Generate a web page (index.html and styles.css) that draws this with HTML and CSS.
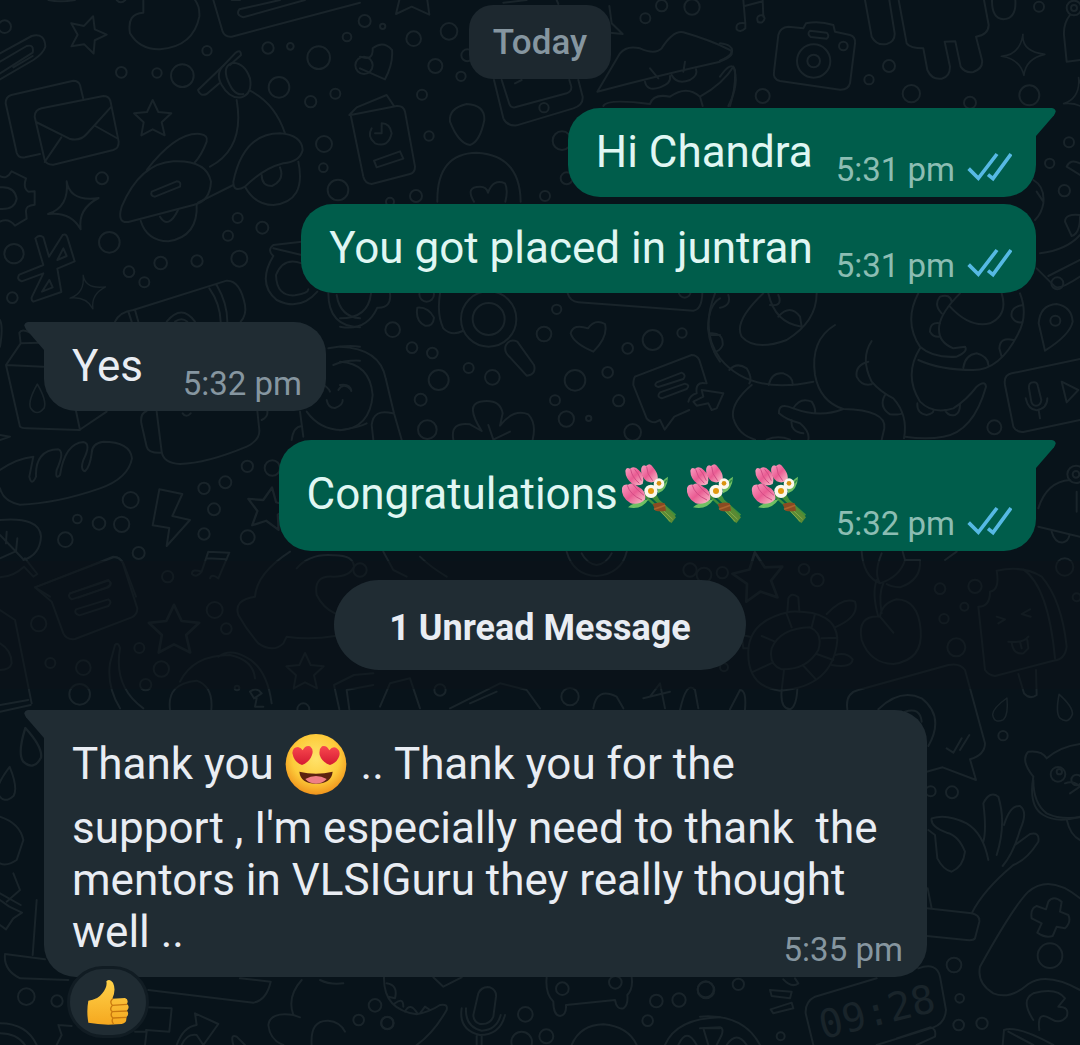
FILE: index.html
```html
<!DOCTYPE html>
<html lang="en">

<head>
    <meta charset="UTF-8">
    <meta name="viewport" content="width=device-width, initial-scale=1">
    <title>Chat</title>
    <link rel="stylesheet" href="styles.css">
</head>

<body>
    <!-- Doodle wallpaper -->
    <svg class="wallpaper" viewBox="0 0 3240 3135" preserveAspectRatio="xMidYMin slice" aria-hidden="true">
        <defs>
            <path id="star" d="M0-56 L17-20 L56-16 L27 11 L36 50 L0 32 L-34 50 L-27 11 L-56-16 L-17-20Z"/>
            <path id="spark" d="M-18-72 Q-8-10 78 -22 Q15 10 24 72 Q-5 18 -74 26 Q-10 5 -18-72Z"/>
            <path id="drop" d="M0-50 Q-34 10 -24 34 Q-2 66 24 34 Q34 8 0-50Z"/>
        </defs>

        <!-- envelope, scooter, gear -->
        <g>
            <use href="#star" transform="translate(262 102) rotate(18)"/>
            <use href="#star" transform="translate(458 356)"/>
            <use href="#spark" transform="translate(218 616)"/>
            <use href="#spark" transform="translate(262 876) scale(.7)"/>
            <path d="M430 0 V38 Q380 40 390 100 Q420 150 480 148 Q580 140 598 50 Q600 20 585 0"/>
            <path d="M640 0 L668 95 Q675 112 695 110 L1080 8 M695 0 H720 M915 0 L730 52 Q706 45 718 28 L840 0 M145 0 Q180 8 225 0 M350 0 Q362 14 376 0"/>
            <path d="M0 160 L95 108 Q135 98 136 140 Q130 160 100 180 L0 238 M0 185 L80 138 Q103 132 98 158 L0 220 M40 202 L98 168"/>
            <path d="M120 462 L75 472 Q55 475 50 458 L17 310 Q17 290 34 285 L220 242 Q235 242 240 255 L250 297"/>
            <path d="M125 325 L310 288 Q326 288 331 302 L356 425 Q357 445 340 450 L160 494 Q140 495 134 480 L104 350 Q104 330 125 325Z M108 366 L208 416 Q240 425 260 402 L334 320 M134 486 L184 412 M286 378 L350 414"/>
            <path d="M0 528 Q20 540 35 514 L78 535 Q68 565 85 575 L104 574 V614 Q76 616 78 636 L80 656 L45 677 Q25 652 0 665 M0 562 Q44 558 50 596 Q44 630 0 627"/>
            <path d="M130 712 L147 770 L188 705 Q198 700 202 712 L224 784 L172 806 L184 876 L100 905 Q92 900 96 890 L130 820 L65 844 Q48 838 58 824 L130 795 L106 715 Q118 702 130 712 M190 745 L172 780 L200 768Z M148 840 L126 875 L158 862Z"/>
            <path d="M594 270 L672 195 L705 160 Q722 145 723 165 L690 195 M594 270 Q600 290 620 282 L658 250"/>
            <path d="M672 195 Q645 220 665 255 Q690 298 725 292 Q758 280 750 235 Q735 190 700 188 Q670 195 680 232 Q700 290 730 282"/>
            <path d="M710 300 Q735 445 630 500 M750 272 Q825 310 855 400"/>
            <path d="M440 510 Q530 395 600 402 Q625 405 620 425 Q605 465 584 488"/>
            <path d="M365 620 Q420 490 520 484 Q620 480 633 545 Q630 605 580 615 L385 666 Q350 670 365 620Z M455 575 L530 544 Q545 545 540 560 L465 590 Q450 588 455 575Z"/>
            <path d="M422 662 Q440 722 505 724 Q595 710 590 612 M480 650 Q505 690 534 630 M594 608 L700 555"/>
            <path d="M700 545 Q730 400 840 400 Q905 405 908 450 Q900 485 850 490 Q790 505 735 560 Q700 580 700 545Z M735 560 Q765 615 820 615 Q920 605 895 485 M785 525 Q785 558 816 558 Q855 540 840 502"/>
            <path d="M345 965 Q360 935 400 930 L680 842 Q720 840 735 915 Q740 945 722 965 M385 935 L395 965 M405 930 L415 965 M628 865 Q660 910 662 965 M650 855 Q682 910 682 965 M500 965 Q545 910 585 965 M525 965 Q545 950 562 965"/>
            <path d="M820 768 Q800 750 820 735 L905 725 M820 768 Q770 850 830 900 Q900 935 952 875 M905 790 Q850 770 828 825 Q830 890 885 886 Q925 880 925 868 M985 880 Q985 980 1080 982 M1010 885 Q1020 950 1080 955 M820 745 L905 765"/>
            <circle cx="14" cy="80" r="19"/><circle cx="364" cy="217" r="16"/><circle cx="471" cy="219" r="14"/><circle cx="547" cy="227" r="34"/>
            <circle cx="621" cy="152" r="14"/><circle cx="804" cy="144" r="17"/><circle cx="871" cy="139" r="10"/><circle cx="956" cy="173" r="34"/>
            <circle cx="1041" cy="111" r="13"/><circle cx="837" cy="262" r="31"/><circle cx="932" cy="305" r="17"/><circle cx="1006" cy="281" r="15"/>
            <circle cx="972" cy="432" r="24"/><circle cx="970" cy="503" r="13"/><circle cx="1014" cy="570" r="31"/><circle cx="306" cy="535" r="18"/>
            <circle cx="328" cy="727" r="31"/><circle cx="42" cy="761" r="29"/><circle cx="37" cy="893" r="16"/><circle cx="387" cy="815" r="16"/>
            <circle cx="433" cy="847" r="15"/><circle cx="482" cy="789" r="19"/><circle cx="591" cy="783" r="17"/><circle cx="713" cy="654" r="15"/>
            <circle cx="684" cy="707" r="15"/><circle cx="787" cy="683" r="18"/><circle cx="718" cy="776" r="24"/><circle cx="1092" cy="196" r="26"/>
        </g>

        <!-- card, tablet, lips -->
        <g transform="translate(1080 0)">
            <path d="M118 0 L108 42 L155 20 L208 44 L202 0 M75 238 L0 205 M0 170 Q40 185 38 145 Q70 120 96 150 Q100 190 75 238"/>
            <path d="M-32 345 L-10 322 L80 285 L102 318 M-28 345 L110 318 Q130 316 135 335 L165 500 Q165 518 150 522 L35 552 Q15 550 10 530Z M42 482 L120 454 L130 476 L50 502Z M35 385 Q20 410 45 430 Q85 445 95 400 Q90 370 65 370 V400 H45"/>
            <path d="M320 312 Q375 315 373 360 Q360 425 330 435 Q295 430 270 365 Q265 325 320 312Z"/>
            <path d="M232 605 Q230 460 350 458 Q480 465 482 605 M342 605 Q315 560 360 560 Q380 560 384 578 Q400 535 435 550 Q445 570 436 605"/>
            <path d="M402 240 L430 355 Q440 378 470 376 L640 325 Q670 315 668 290 L655 240 M425 240 L448 312 Q452 324 465 322 L620 280 Q635 275 634 260 L628 240 M465 250 L485 240 M430 8 L500 0 M590 0 L595 12"/>
            <path d="M748 18 L755 70 L788 102 L750 98 M712 275 L780 160 Q800 135 840 145 Q885 165 905 145 Q940 90 970 97 Q1050 120 1110 150 Q1130 165 1080 185 Q900 225 712 275Z M870 205 L895 235 M975 185 L970 215 M855 245 Q860 275 900 262 Q935 250 930 228 M935 225 Q950 255 990 240 Q1015 225 1008 208"/>
            <path d="M730 318 Q740 295 870 312 Q880 280 930 290 Q980 255 1020 290 L1028 318 M1020 290 Q1090 250 1120 200 Q1140 250 1105 318"/>
            <circle cx="14" cy="63" r="18"/><circle cx="68" cy="79" r="8"/><circle cx="161" cy="116" r="22"/><circle cx="267" cy="94" r="25"/>
            <circle cx="226" cy="198" r="21"/><circle cx="303" cy="229" r="14"/><circle cx="186" cy="284" r="15"/><circle cx="207" cy="408" r="14"/>
            <circle cx="168" cy="588" r="18"/><circle cx="90" cy="605" r="12"/><circle cx="322" cy="166" r="18"/><circle cx="552" cy="323" r="14"/><circle cx="606" cy="422" r="28"/>
            <circle cx="555" cy="588" r="15"/><circle cx="620" cy="535" r="18"/><circle cx="856" cy="55" r="15"/><circle cx="905" cy="17" r="17"/><circle cx="996" cy="21" r="23"/>
        </g>

        <!-- camera, dripping paint, bell -->
        <g transform="translate(2160 0)">
            <use href="#spark" transform="translate(908 164) scale(.82) rotate(15)"/>
            <use href="#spark" transform="translate(1090 290) scale(.8)"/>
            <path d="M70 0 L76 70 M128 0 L130 50 M74 18 L128 4 M76 70 Q45 65 50 88 Q60 100 76 85Z M130 45 Q105 45 114 66 Q130 72 134 55Z"/>
            <path d="M205 80 L250 85 L258 70 Q298 62 340 75 L345 95 L390 105 Q407 110 405 130 L390 250 Q385 270 360 269 L180 243 Q158 238 162 215 L175 105 Q180 82 205 80Z M270 92 L320 98 Q330 108 320 116 L272 111 Q260 102 270 92Z"/>
            <circle cx="281" cy="183" r="50"/><circle cx="281" cy="183" r="19"/><circle cx="370" cy="138" r="13"/>
            <path d="M435 0 L455 110 Q470 138 500 132 Q525 125 524 100 L508 0 M536 0 L560 130 Q570 145 610 145 L622 210 Q635 240 665 236 Q690 230 690 200 L674 125 L706 124 L722 200 Q735 220 760 216 Q790 205 786 180 L768 110 Q805 105 806 75 L792 0 M816 0 Q815 55 850 58 Q890 55 886 0"/>
            <circle cx="1062" cy="24" r="22"/><circle cx="1062" cy="24" r="9"/><path d="M1050 45 Q1030 70 1032 105 L1040 185 L1080 180"/>
            <circle cx="957" cy="20" r="15"/><circle cx="507" cy="198" r="18"/><circle cx="447" cy="239" r="14"/><circle cx="574" cy="281" r="26"/><circle cx="128" cy="288" r="21"/>
            <circle cx="750" cy="308" r="18"/><circle cx="928" cy="286" r="30"/><circle cx="1047" cy="427" r="15"/><circle cx="989" cy="490" r="14"/><circle cx="1033" cy="572" r="17"/>
            <path d="M0 130 Q40 135 36 155 Q30 170 0 182 M0 230 Q35 180 45 210 Q48 260 30 318 M1040 500 Q1050 475 1080 490 M1040 500 L1080 525 M940 540 Q975 560 970 610 Q965 640 945 660 M950 575 L970 605 M1080 645 Q1035 640 1035 665 L1055 708 Q1080 700 1080 650 M960 760 Q1040 750 1080 705 M950 805 L1005 860 Q1020 870 1080 830 M985 828 L1080 780"/>
        </g>

        <!-- milk carton, bread, bolt, leaf -->
        <g transform="translate(0 900)">
            <use href="#star" transform="translate(805 626) scale(1.15) rotate(10)"/>
            <use href="#drop" transform="translate(112 295) scale(.85)"/>
            <path d="M62 130 L58 98 Q65 85 90 98 M62 130 L18 195 L60 380 Q65 385 80 385 L238 390 L320 335 M18 195 L130 200 M62 130 L120 128 M228 333 L240 390"/>
            <path d="M0 510 Q50 475 100 470 L88 530 Q95 560 108 530 Q105 450 175 448 Q195 455 170 510 Q165 540 180 525 Q195 430 250 426 Q275 430 250 480 Q240 510 255 514 Q270 500 275 460 Q275 430 310 425 Q390 425 396 475 Q385 535 300 565 Q170 610 60 614 Q10 605 0 565"/>
            <path d="M470 335 L485 455 Q490 490 540 492 Q620 490 740 440 Q780 420 778 390 L772 333 M440 333 Q420 340 424 370 L440 440 Q445 460 485 458 M548 340 Q558 355 572 340 M785 360 Q805 350 802 333"/>
            <path d="M920 335 Q960 390 1025 390 Q1080 380 1100 370 M985 145 Q1040 135 1080 140 M1000 195 Q1035 180 1080 182 M960 250 Q985 260 990 275 M1015 270 Q1030 245 1052 268 M980 300 Q985 325 1005 324 Q1030 315 1028 300 M900 335 L910 410 M875 420 Q880 380 905 378"/>
            <path d="M478 568 L547 582 L517 648 L570 660 L500 738 L508 684 L458 676Z"/>
            <path d="M0 660 Q120 650 123 710 Q120 765 70 780 M0 832 Q40 830 72 800 L100 830 L112 822 L75 775 M72 780 L0 705 M20 695 L18 730 M52 715 L48 755 M0 775 L45 755"/>
            <path d="M105 862 L340 770 Q360 770 370 790 L408 890 M105 862 L150 890 M210 880 L325 840 Q340 852 320 862 L235 893"/>
            <path d="M0 405 L30 410 L0 420"/>
            <path d="M0 60 Q10 80 0 140"/>
            <circle cx="742" cy="499" r="17"/><circle cx="817" cy="504" r="23"/><circle cx="676" cy="547" r="18"/><circle cx="612" cy="565" r="17"/><circle cx="642" cy="628" r="18"/>
            <circle cx="612" cy="702" r="17"/><circle cx="743" cy="712" r="21"/><circle cx="392" cy="600" r="24"/><circle cx="365" cy="673" r="23"/><circle cx="297" cy="670" r="19"/>
            <circle cx="232" cy="657" r="13"/><circle cx="196" cy="719" r="22"/><circle cx="416" cy="759" r="18"/>
        </g>

        <!-- magnifier, flower, note with arrow -->
        <g transform="translate(1020 855)">
            <circle cx="446" cy="102" r="83"/><circle cx="446" cy="102" r="48"/>
            <path d="M0 100 Q85 100 93 25 M0 125 Q80 140 112 68 Q155 70 150 25 M300 25 Q290 90 310 130 Q335 155 368 138 M498 180 Q510 160 532 170 L582 240 Q590 268 560 272 L508 215 Q490 198 498 180"/>
            <path d="M232 68 Q265 65 282 98 Q280 125 255 122 Q225 108 232 68Z M760 200 Q700 175 692 145 Q700 115 744 130 Q765 100 795 117 Q805 155 760 200Z M683 25 Q690 50 715 52 L1060 77 Q1085 75 1087 25"/>
            <path d="M0 185 Q120 190 137 280 L162 385 L185 464 M0 230 Q90 235 98 330 Q90 430 0 436 M0 300 Q30 295 34 318 M100 464 L95 420 Q100 370 158 385"/>
            <path d="M340 464 Q330 410 390 418 L425 438 Q375 360 420 350 Q480 340 488 385 L480 422 Q520 370 565 388 Q590 415 578 464 M445 420 L460 464 L510 440"/>
            <path d="M885 275 L1055 210 Q1070 210 1078 225 L1100 295 M885 275 Q880 282 880 300 L920 400 Q930 412 945 412 L960 405 L974 434 L1003 395 L1048 375 M950 292 L1025 263 Q1040 270 1030 282 L955 306 Q940 302 950 292Z M960 322 L1035 296 Q1052 300 1040 312 L965 340 Q948 335 960 322Z"/>
            <path d="M1060 350 L1090 335 L1085 315 L1150 325 L1130 370 L1115 375 L1105 355 L1070 362Z M1045 350 Q1050 330 1070 325 Q1065 290 1095 295"/>
            <path d="M1140 40 Q1105 60 1104 130 Q1110 190 1140 230 M1110 150 L1140 150"/>
            <circle cx="158" cy="134" r="22"/><circle cx="216" cy="188" r="16"/><circle cx="277" cy="204" r="16"/><circle cx="386" cy="249" r="15"/><circle cx="457" cy="277" r="22"/>
            <circle cx="296" cy="285" r="30"/><circle cx="242" cy="344" r="18"/><circle cx="262" cy="434" r="28"/><circle cx="260" cy="28" r="22"/><circle cx="650" cy="73" r="14"/><circle cx="612" cy="147" r="22"/>
            <circle cx="938" cy="165" r="30"/><circle cx="1026" cy="144" r="14"/><circle cx="863" cy="190" r="16"/><circle cx="803" cy="262" r="16"/><circle cx="705" cy="286" r="31"/>
            <circle cx="645" cy="346" r="15"/><circle cx="679" cy="402" r="23"/><circle cx="746" cy="400" r="8"/><circle cx="836" cy="347" r="17"/><circle cx="878" cy="442" r="25"/><circle cx="1034" cy="20" r="18"/>
        </g>

        <!-- snakes, pin, voice note, bell -->
        <g transform="translate(2100 855)">
            <path d="M45 25 Q0 140 60 220 Q150 330 340 290 M190 25 Q100 110 125 155 Q165 200 260 165 Q350 110 350 25 M205 25 Q225 115 305 125 M235 95 Q270 55 300 95 L305 125 M210 60 Q250 65 235 30 M60 68 Q95 62 85 30 M28 145 Q70 140 68 180 Q60 200 42 200 M88 255 Q110 230 140 250 Q158 280 148 295 M206 300 Q215 260 250 265 Q280 275 278 300"/>
            <path d="M405 120 Q330 165 345 270 Q360 350 430 372 Q560 375 553 430 L545 464 M515 168 Q480 220 515 290 Q540 320 580 340 Q625 390 612 460 M505 230 Q465 240 470 275 Q485 305 515 298 M555 330 Q535 365 570 388 Q600 390 605 385"/>
            <path d="M155 300 Q90 355 100 400 Q115 450 165 464 M430 372 Q360 400 280 370 Q235 350 237 385 Q260 405 300 415 Q330 440 325 464 M280 370 Q300 335 335 350 Q348 370 345 385 M275 405 Q270 440 310 445 M200 464 Q235 450 270 464"/>
            <path d="M655 25 Q610 110 660 185 Q700 220 770 215 Q805 200 795 185 L760 190 Q710 170 718 120 Q725 80 780 25 M720 115 Q690 110 690 140 Q700 158 720 155 M725 85 Q700 60 720 35 Q750 25 755 50 M750 65 Q810 130 870 115 Q925 90 905 25 M960 25 Q985 90 955 145 Q900 255 820 255 Q720 255 655 225 M970 60 Q930 65 935 95 Q945 115 965 112 M940 165 Q900 155 898 190 L905 215 M790 248 Q795 210 830 205 Q865 215 865 240"/>
            <path d="M660 190 Q610 270 660 350 Q700 390 760 370 Q800 345 830 305 Q855 285 858 305 Q820 440 730 455 Q680 465 615 455 M652 355 Q650 385 680 390 Q700 385 700 378 M735 375 Q745 395 765 390 Q780 385 780 358"/>
            <path d="M1035 197 L1016 115 Q1020 60 1070 57 Q1115 65 1118 110 Q1110 150 1035 197Z M1140 222 L935 265 Q910 270 915 300 L940 425 Q950 443 970 441 L1140 405 M1085 290 L1135 315 L1100 352Z M987 310 Q985 292 1000 292 Q1012 290 1014 305 L1024 345 Q1022 362 1008 362 Q995 362 993 345Z M977 340 Q985 375 1010 376 Q1042 370 1042 340 M1016 376 L1020 400"/>
            <path d="M1015 670 Q1040 590 1110 585 M1015 725 L1140 755 M1055 740 Q1065 775 1090 772 Q1105 768 1108 752 M1130 620 V680 M735 825 L770 800"/>
            <circle cx="1066" cy="107" r="15"/><circle cx="883" cy="427" r="21"/><circle cx="1128" cy="568" r="26"/><circle cx="1128" cy="568" r="10"/><circle cx="1072" cy="-5" r="18"/>
        </g>

        <!-- speech note, dog, stars -->
        <g transform="translate(0 1620)">
            <use href="#star" transform="translate(522 270) scale(1.35)"/>
            <use href="#star" transform="translate(915 395)"/>
            <path d="M105 142 L340 52 Q358 50 368 68 L412 205 Q412 225 395 232 L225 297 Q200 300 190 280 L155 185Z M210 160 L325 122 Q340 130 325 142 L215 178 Q202 170 210 160Z M228 208 L325 178 Q338 185 325 198 L238 226 Q220 220 228 208Z"/>
            <path d="M625 35 L688 38 M625 35 L605 95 M688 38 L655 115 M620 55 L680 58 M605 95 Q575 85 576 102 Q590 115 605 95 M655 115 Q635 100 630 115"/>
            <path d="M765 170 Q770 100 870 35 M765 170 Q700 180 715 225 Q740 270 775 310 Q820 340 850 310 L860 290 Q930 300 1005 288 M890 85 Q930 40 1000 46 Q1060 45 1062 80 Q1050 110 1000 110 Q940 105 950 165 Q970 205 1005 220"/>
            <path d="M0 210 L45 240 L95 490 M0 310 Q35 330 35 370 Q30 390 0 390 M0 495 L85 480 M0 515 L92 495 M360 505 Q320 440 330 370 L345 315 Q355 305 360 325 Q340 440 430 505 M510 508 Q500 430 590 422 Q640 440 634 508 M540 425 Q580 345 690 345 Q760 360 765 415 M655 350 Q690 325 735 350 Q800 380 815 490 M750 455 Q770 440 785 460 L762 475Z M770 475 L765 500 L790 500"/>
            <path d="M1018 508 L1002 435 L1062 405 L1120 400 M1048 508 L1040 450 L1120 435"/>
            <circle cx="711" cy="444" r="7"/><circle cx="503" cy="110" r="17"/><circle cx="116" cy="251" r="23"/><circle cx="644" cy="210" r="24"/><circle cx="679" cy="266" r="16"/><circle cx="418" cy="324" r="15"/>
            <circle cx="484" cy="387" r="23"/><circle cx="437" cy="434" r="17"/><circle cx="151" cy="369" r="15"/><circle cx="250" cy="383" r="22"/><circle cx="239" cy="463" r="31"/><circle cx="910" cy="508" r="18"/>
            <use href="#drop" transform="translate(88 620) scale(1.15) rotate(-12)"/>
            <use href="#drop" transform="translate(22 730) rotate(8)"/>
            <path d="M0 830 Q60 850 70 900 L50 960 Q20 980 0 970 M0 1060 L62 1095 M40 1000 L60 1050 L20 1085"/>
        </g>

        <!-- doodles round the unread divider -->
        <g transform="translate(1020 1650)">
            <path d="M680 5 Q700 75 770 78 Q845 70 860 5 M725 10 Q740 40 770 45 Q800 40 815 10 M130 5 L160 60 L200 80 M240 20 Q270 50 320 80 M1020 480 Q1040 390 1065 420 L1075 475 M120 470 L150 400 L210 385 L240 475 M330 475 L480 400 L560 420 L600 475 M390 460 L470 425 M760 475 Q770 410 830 440 L850 475 M930 440 L960 400 L975 475 M910 445 L990 425"/>
            <circle cx="60" cy="60" r="20"/><circle cx="300" cy="420" r="17"/><circle cx="690" cy="440" r="26"/><circle cx="1050" cy="60" r="20"/>
        </g>

        <!-- turtle, cherries, ice cream, photo card, bear -->
        <g transform="translate(2100 1620)">
            <use href="#star" transform="translate(175 112) scale(1.35) rotate(-8)"/>
            <path d="M145 330 Q150 240 270 215 Q410 210 412 300 Q400 440 240 452 Q140 440 145 330Z M215 325 Q240 265 330 262 Q370 280 355 330 Q320 390 245 388 Q205 375 215 325Z M185 288 L225 305 M260 222 L275 262 M345 222 L335 262 M365 295 L412 293 M350 342 L400 360 M308 375 L345 415 M252 390 L245 450 M160 395 L218 368"/>
            <path d="M262 215 L265 175 Q275 155 295 172 L298 215 M380 222 Q430 170 465 185 Q480 230 405 262 M395 375 Q455 385 458 358 Q440 335 405 345 M245 450 Q240 505 270 508 Q290 500 292 445 M150 290 L125 285 L130 325 L145 325 M90 508 L120 450 Q140 450 135 508"/>
            <path d="M540 230 Q470 225 485 300 Q510 370 580 372 Q670 360 662 270 Q655 180 590 178 Q545 190 540 230 L580 278 M535 230 Q515 160 530 120 M545 220 Q535 160 550 130 M485 35 Q490 110 540 130 M545 40 Q520 100 540 130 Q600 110 615 60 L660 60 Q665 120 600 142 Q570 140 560 132 M615 60 L608 35"/>
            <path d="M890 92 Q970 75 1025 110 Q1085 180 1100 320 Q1095 360 1060 362 L885 408 Q865 405 855 390 L835 200 Q870 200 870 155 Q900 150 890 92Z M970 88 Q1045 140 1065 355 M955 402 L972 460 Q990 480 1010 465 L1008 390 M890 230 L915 238 L895 250 M990 208 L965 222 L992 230 M925 305 Q970 310 985 290 M935 308 Q940 345 970 340 L985 325 L982 300 M960 305 L965 325"/>
            <circle cx="312" cy="88" r="16"/><circle cx="352" cy="120" r="19"/><circle cx="67" cy="98" r="17"/><circle cx="12" cy="105" r="22"/><circle cx="720" cy="146" r="16"/><circle cx="825" cy="139" r="20"/><circle cx="793" cy="200" r="12"/>
            <circle cx="732" cy="236" r="14"/><circle cx="769" cy="322" r="27"/><circle cx="1094" cy="81" r="26"/><circle cx="1130" cy="172" r="12"/><circle cx="72" cy="382" r="12"/>
            <path d="M442 508 Q435 460 475 450 L745 375 Q780 368 795 390 L855 610 Q855 645 810 658 L828 720 L728 682 L680 695 M535 508 Q600 445 665 475 Q735 530 685 618 M615 515 Q660 500 665 545 M740 625 L760 638 L785 595 M780 630 L808 585"/>
            <use href="#drop" transform="translate(905 508) scale(.75) rotate(25)"/>
            <use href="#drop" transform="translate(1090 502) scale(.82) rotate(-18)"/>
            <path d="M1000 710 Q960 660 985 635 Q1025 630 1040 655 Q1080 620 1140 612 M1000 710 Q985 800 1030 825 Q1070 850 1140 830 M1095 730 Q1120 720 1140 740 L1110 760"/>
            <circle cx="909" cy="587" r="14"/><circle cx="1074" cy="703" r="22"/><circle cx="1078" cy="695" r="8"/><circle cx="1130" cy="720" r="16"/><circle cx="692" cy="754" r="15"/><circle cx="756" cy="757" r="18"/>
        </g>

        <!-- hand, game pad, alarm clock -->
        <g transform="translate(2100 2340)">
            <path d="M685 150 L705 165 L712 235 Q730 270 755 275 Q790 260 795 215 Q775 165 740 158 Q690 140 695 115 Q740 100 800 130 Q850 160 865 240 M850 185 Q860 150 850 70 Q870 30 895 50 Q920 130 890 225 M912 135 Q930 75 960 78 Q985 95 960 150 Q940 220 908 258 M945 195 L990 162 Q1020 155 1015 185 Q980 240 940 255 Q850 330 815 400 M683 325 L695 385 M680 385 L815 400 Q840 405 838 425 L825 475 Q820 482 800 480 L680 468"/>
            <path d="M1140 355 Q1050 280 985 335 Q940 380 840 560 Q830 610 880 640 Q930 660 985 612 Q1040 575 1140 630 M1045 365 Q1060 345 1085 365 L1080 395 L1105 405 Q1115 425 1095 445 L1070 440 L1058 468 Q1035 475 1012 458 L1025 430 L995 415 Q990 385 1010 378 L1038 388Z"/>
            <circle cx="1050" cy="527" r="37"/><circle cx="762" cy="555" r="22"/><circle cx="779" cy="655" r="13"/><circle cx="776" cy="735" r="16"/><circle cx="846" cy="730" r="17"/>
            <circle cx="18" cy="630" r="25"/><circle cx="115" cy="613" r="17"/><circle cx="242" cy="769" r="12"/>
            <path d="M1000 720 Q960 660 1000 640 Q1070 620 1095 655 L1075 680 Q1110 680 1100 710 Q1080 735 1050 715 Q1010 690 1018 750 M908 795 L912 750 Q950 735 1060 795 M925 755 L1000 795"/>
            <path d="M210 630 L275 635 L270 655 L215 648Z M212 688 L275 668 L280 685 L220 700Z M250 598 Q275 625 295 610 L285 595 M340 795 L317 700 Q315 665 345 650 L530 595 M655 565 Q710 545 720 590 L738 690 Q735 730 700 742 L530 795 M590 775 L690 742 Q710 745 705 770 L650 795 M0 710 Q130 700 180 795 M0 745 L60 742 Q72 745 65 765 L50 795 M80 795 Q110 750 140 795 M1000 0 Q1000 70 1040 100 Q1080 120 1140 112 M1100 118 Q1110 165 1140 180"/>
            <text x="368" y="778" transform="rotate(-14 368 778)">09:28</text>
        </g>

        <!-- tray, arrows, microphone, bone -->
        <g transform="translate(0 2700)">
            <path d="M0 0 L28 20 L66 38 L40 55 L18 88 L0 75 M110 0 L98 165 M135 178 L15 162 Q10 210 60 235 L205 240 M445 270 L760 308 Q800 300 812 245 L720 235 M445 322 L515 325 L508 395 L438 390 M405 395 H440 L435 435 M585 340 L655 372 L610 435 L590 405 Q560 400 545 435 M585 340 L590 375 Q550 380 530 435 M905 240 Q860 290 880 345 Q810 335 805 375 Q810 420 850 435 M880 345 L900 352 M960 240 Q990 255 1030 250 M935 435 Q930 360 985 362 Q1020 365 1035 395 M175 375 L215 378 M175 375 L185 405 L170 435 M0 370 Q80 370 110 435 M0 400 Q50 400 75 435 M700 435 Q690 400 710 410 L735 435"/>
            <circle cx="79" cy="290" r="25"/><circle cx="171" cy="303" r="17"/><circle cx="1125" cy="316" r="19"/><circle cx="1076" cy="360" r="16"/><circle cx="1162" cy="369" r="19"/>
        </g>
        <g transform="translate(1140 2880)">
            <path d="M12 52 Q10 150 110 163 Q150 155 180 135 Q205 130 200 150 Q160 220 110 255 M20 70 Q55 75 45 115 L25 110 M45 130 Q70 110 70 140 M75 155 Q90 125 112 160 M120 160 L135 140 L150 150 M160 52 L190 80 L245 52 M295 100 Q305 78 330 82 Q350 90 348 110 L340 170 Q330 195 300 192 Q280 185 280 165Z M245 145 Q235 210 300 225 Q360 225 375 165 M258 145 Q255 200 305 212 Q350 210 362 165 M290 228 V255 M305 228 V255 M500 52 Q495 100 520 125 Q520 165 540 168 Q560 165 558 135 L705 120 Q710 150 730 145 Q745 135 742 105 Q760 85 755 52 M575 255 Q600 195 670 193 Q745 200 770 255 M855 255 Q890 175 1020 172 M895 255 Q920 200 950 255 M970 205 H1020 M970 205 L985 255"/>
            <circle cx="22" cy="189" r="18"/><circle cx="436" cy="163" r="22"/><circle cx="425" cy="246" r="31"/><circle cx="499" cy="229" r="21"/><circle cx="547" cy="86" r="19"/><circle cx="706" cy="67" r="19"/>
            <circle cx="829" cy="123" r="19"/><circle cx="897" cy="120" r="20"/><circle cx="977" cy="88" r="24"/><circle cx="803" cy="182" r="16"/>
        </g>
    </svg>

    <!-- Shared shapes -->
    <svg class="sprite" aria-hidden="true">
        <defs>
            <linearGradient id="petal" x1="0" y1="0" x2="1" y2="1">
                <stop offset="0" stop-color="#f9a3c4"/>
                <stop offset=".5" stop-color="#ea5c93"/>
                <stop offset="1" stop-color="#fbc6cf"/>
            </linearGradient>
            <radialGradient id="face" cx=".5" cy=".4" r=".6">
                <stop offset="0" stop-color="#ffe36b"/>
                <stop offset=".65" stop-color="#fdcb3a"/>
                <stop offset="1" stop-color="#f0941d"/>
            </radialGradient>
            <linearGradient id="heart" x1="0" y1="0" x2="0" y2="1">
                <stop offset="0" stop-color="#f8484e"/>
                <stop offset="1" stop-color="#d51a32"/>
            </linearGradient>
            <linearGradient id="hand" x1="0" y1="0" x2="0" y2="1">
                <stop offset="0" stop-color="#ffd24a"/>
                <stop offset="1" stop-color="#f5a81f"/>
            </linearGradient>
        </defs>
        <symbol id="ticks" viewBox="738 453 135 114">
            <path d="M743 506 L772 535 L828 462 M801 524 L816 536 L870 462" fill="none" stroke="#56b9e4" stroke-width="11"/>
        </symbol>
        <symbol id="tail" viewBox="0 0 60 90">
            <path d="M0 0 H48 Q66 4 54 22 L0 84Z" fill="currentColor"/>
        </symbol>
        <symbol id="bouquet" viewBox="48 72 195 183">
            <path d="M120 160 L200 232 M135 155 L212 228 M150 165 L220 226 M160 165 L205 245" stroke="#3f8f3a" stroke-width="7" fill="none"/>
            <path d="M160 200 L188 196 L222 232 L208 250Z" fill="#5a8a34"/>
            <path d="M184 212 L212 238 M176 214 L204 244" stroke="#86a84a" stroke-width="3"/>
            <path d="M78 202 Q100 184 140 178 Q118 212 78 202Z M168 160 Q196 150 198 110 Q180 120 168 140Z" fill="#6fc063"/>
            <path d="M110 185 L130 178 M180 140 L194 120" stroke="#2f8b45" stroke-width="4"/>
            <path d="M70 92 Q72 80 84 86 Q98 76 110 90 Q130 106 122 132 Q108 140 92 132 Q70 116 70 92Z" fill="url(#petal)"/>
            <path d="M118 84 Q122 72 132 78 Q144 66 152 80 Q172 104 166 120 Q152 132 134 124 Q114 108 118 84Z" fill="url(#petal)"/>
            <path d="M60 144 Q64 132 78 134 Q92 124 108 140 Q132 150 130 178 Q112 196 86 190 Q56 172 60 144Z" fill="url(#petal)"/>
            <path d="M86 88 Q90 112 112 130 M134 80 Q134 102 152 122 M76 136 Q84 164 120 180 M92 132 Q104 150 126 166 M98 88 Q108 98 118 122" stroke="#d14c85" stroke-width="3" fill="none"/>
            <path d="M152 192 Q170 184 188 190 L192 212 Q176 216 160 212Z" fill="#8a4b22"/>
            <path d="M156 208 L190 196" stroke="#a9642f" stroke-width="5"/>
            <circle cx="171" cy="131" r="16" fill="#fbf7ec"/><circle cx="147" cy="154" r="20" fill="#fbf7ec"/>
            <circle cx="171" cy="130" r="7" fill="#d9930f"/><circle cx="147" cy="153" r="9" fill="#e29a10"/>
        </symbol>
        <symbol id="heart-eyes" viewBox="853 583 195 183">
            <circle cx="946" cy="674" r="91" fill="url(#face)"/>
            <path d="M904 676 Q880 668 875 640 Q876 622 892 622 Q902 624 906 632 Q914 616 928 620 Q940 630 934 646 Q926 668 904 676Z" fill="url(#heart)"/>
            <path d="M988 676 Q964 668 957 646 Q954 628 964 620 Q978 616 986 632 Q994 620 1006 624 Q1020 632 1016 648 Q1010 668 988 676Z" fill="url(#heart)"/>
            <path d="M896 696 Q946 708 996 696 Q992 732 946 732 Q900 732 896 696Z" fill="#5b2410"/>
            <path d="M914 718 Q946 700 978 718 Q966 732 946 732 Q926 732 914 718Z" fill="#ef7f86"/>
        </symbol>
        <symbol id="thumb" viewBox="252 240 138 144">
            <path d="M262 308 Q290 306 304 286 Q320 266 316 250 Q326 240 336 254 Q346 276 334 302 L372 300 Q384 304 378 318 Q388 326 378 338 Q386 348 376 358 Q378 376 362 378 L322 380 Q290 378 262 374 Q256 340 262 308Z" fill="url(#hand)"/>
            <path d="M336 302 Q324 310 334 322 L378 319 M334 322 Q324 334 334 341 L378 339 M334 341 Q326 352 336 360 L376 358 M336 360 Q330 370 338 378" fill="none" stroke="#c9790f" stroke-width="4"/>
        </symbol>
    </svg>

    <main class="chat">
        <div class="date">Today</div>

        <div class="bubble out first">
            <svg class="tail"><use href="#tail"/></svg>
            <p class="text">Hi Chandra</p>
            <div class="meta"><time>5:31 pm</time><svg class="ticks" role="img" aria-label="Read"><use href="#ticks"/></svg></div>
        </div>

        <div class="bubble out next">
            <p class="text">You got placed in juntran</p>
            <div class="meta"><time>5:31 pm</time><svg class="ticks" role="img" aria-label="Read"><use href="#ticks"/></svg></div>
        </div>

        <div class="bubble in first">
            <svg class="tail"><use href="#tail"/></svg>
            <p class="text">Yes</p>
            <div class="meta"><time>5:32 pm</time></div>
        </div>

        <div class="bubble out first">
            <svg class="tail"><use href="#tail"/></svg>
            <p class="text">Congratulations<svg class="emoji" role="img" aria-label="bouquet"><use href="#bouquet"/></svg><svg class="emoji" role="img" aria-label="bouquet"><use href="#bouquet"/></svg><svg class="emoji" role="img" aria-label="bouquet"><use href="#bouquet"/></svg></p>
            <div class="meta"><time>5:32 pm</time><svg class="ticks" role="img" aria-label="Read"><use href="#ticks"/></svg></div>
        </div>

        <div class="unread"><span>1 Unread Message</span></div>

        <div class="bubble in first long">
            <svg class="tail"><use href="#tail"/></svg>
            <p class="text">Thank you <svg class="emoji" role="img" aria-label="heart eyes"><use href="#heart-eyes"/></svg> .. Thank you for the support , I'm especially need to thank&nbsp; the mentors in VLSIGuru they really thought well ..</p>
            <div class="meta"><time>5:35 pm</time></div>
            <button class="reaction" type="button" aria-label="Thumbs up reaction"><svg><use href="#thumb"/></svg></button>
        </div>
    </main>
</body>

</html>
```
FILE: styles.css
```css
* {
    box-sizing: border-box;
}

body {
    margin: 0;
    min-height: 100vh;
    position: relative;
    overflow-x: hidden;
    background: #08131a;
    font-family: Roboto, "Liberation Sans", sans-serif;
}

.wallpaper {
    position: absolute;
    top: 0;
    left: 0;
    z-index: -1;
    width: 100%;
    height: 100%;
    fill: none;
    stroke: #19242a;
    stroke-width: 6;
    stroke-linejoin: round;
    stroke-linecap: round;
}

.wallpaper text {
    fill: #19242a;
    stroke: none;
    font-family: "DejaVu Sans Mono", monospace;
    font-size: 118px;
}

.sprite {
    position: absolute;
    width: 0;
    height: 0;
}

.chat {
    display: flex;
    flex-direction: column;
    align-items: flex-start;
    padding: 5px 44px 0;
}

.date {
    align-self: center;
    padding: 18px 24px 16px;
    border-radius: 24px;
    background: #1d282f;
    color: #8696a0;
    font-size: 35px;
    font-weight: 500;
    line-height: 40px;
}

.bubble {
    position: relative;
    display: flex;
    align-items: flex-end;
    justify-content: space-between;
    gap: 23px;
    max-width: 89%;
    min-width: 282px;
    margin-top: 29px;
    padding: 18px 24px 7px 28px;
    border-radius: 32px;
}

.bubble.next {
    margin-top: 7px;
}

.bubble.in {
    background: #202c33;
    color: #e9edf3;
}

.bubble.out {
    align-self: flex-end;
    background: #005d4b;
    color: #e0f7f3;
}

.bubble.in.first {
    border-top-left-radius: 0;
}

.bubble.out.first {
    border-top-right-radius: 0;
}

.tail {
    position: absolute;
    top: 0;
    left: 100%;
    width: 20px;
    height: 30px;
}

.out .tail {
    color: #005d4b;
}

.in .tail {
    left: auto;
    right: 100%;
    color: #202c33;
    transform: scaleX(-1);
}

.text {
    margin: 0;
    padding-bottom: 12px;
    font-size: 44px;
    line-height: 52px;
}

.emoji {
    width: 65px;
    height: 61px;
    margin: 6px 0 7px;
    vertical-align: -23px;
}

.meta {
    display: flex;
    align-items: center;
    gap: 12px;
    font-size: 33px;
    line-height: 40px;
    white-space: nowrap;
    color: #8696a0;
}

.out .meta {
    color: #8cbdb3;
}

.ticks {
    width: 45px;
    height: 38px;
}

/* time sits in the free corner of the last line */
.long {
    display: grid;
}

.long .text,
.long .meta {
    grid-area: 1 / 1;
}

.long .text {
    padding-right: 20px;
}

.long .meta {
    align-self: end;
    justify-self: end;
}

.unread {
    align-self: stretch;
    display: flex;
    justify-content: center;
    margin: 10px -44px -8px;
    padding: 19px 0;
    background: rgba(11, 17, 24, 0.5);
}

.unread span {
    padding: 28px 55px 22px;
    border-radius: 45px;
    background: #202c33;
    color: #e9edf3;
    font-size: 36px;
    font-weight: 700;
    line-height: 40px;
}

.reaction {
    position: absolute;
    top: calc(100% - 11px);
    left: 23px;
    display: flex;
    align-items: center;
    justify-content: center;
    width: 82px;
    height: 72px;
    padding: 0;
    border: 3px solid #111c23;
    border-radius: 36px;
    background: #202c33;
}

.reaction svg {
    width: 46px;
    height: 48px;
}
```
